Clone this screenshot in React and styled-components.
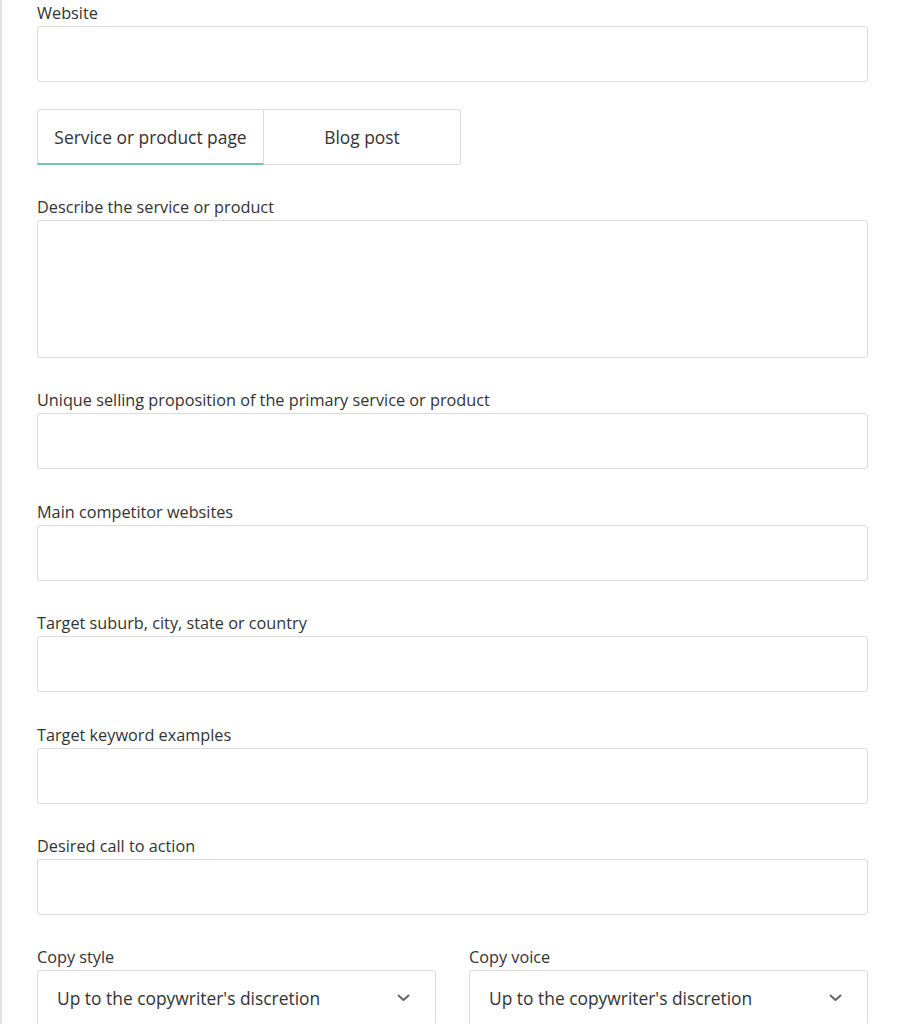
import React, { useState } from 'react'
import styled, { createGlobalStyle } from 'styled-components'

const GlobalStyle = createGlobalStyle`
    html, body {
        margin: 0;
        padding: 0;
        background: #fff;
        font-family: "Open Sans", "Liberation Sans", sans-serif;
        color: #333;
    }
    * { box-sizing: border-box; }
`

const Page = styled.div`
    border-left: 2px solid #e4e4e4;
    min-height: 1024px;
    padding: 3px 36px 0 35px;
`

const Field = styled.div`
    margin-bottom: 32.4px;
`

const Label = styled.label`
    display: block;
    font-size: 16.25px;
    line-height: 20px;
    margin-bottom: 3px;
    color: #333;
`

const Input = styled.input`
    display: block;
    width: 100%;
    height: 56px;
    border: 1px solid #dcdcdc;
    border-radius: 3px;
    padding: 0 20px;
    font: inherit;
    font-size: 17.4px;
    outline: none;
`

const TextArea = styled.textarea`
    display: block;
    width: 100%;
    height: 138px;
    border: 1px solid #dcdcdc;
    border-radius: 3px;
    padding: 12px 20px;
    font: inherit;
    font-size: 17.4px;
    resize: none;
    outline: none;
`

const Tabs = styled.div`
    display: flex;
    margin: -5.4px 0 32px;
`

const Tab = styled.button`
    height: 56px;
    width: ${p => p.$w}px;
    background: #fff;
    border: 1px solid #dcdcdc;
    border-left-width: ${p => (p.$first ? 1 : 0)}px;
    border-bottom: ${p => (p.$active ? '2px solid #72c7a3' : '1px solid #dcdcdc')};
    border-radius: ${p => (p.$first ? '3px 0 0 0' : '0 3px 3px 0')};
    font-family: inherit;
    font-size: 17.4px;
    color: #333;
    cursor: pointer;
    padding: 0;
`

const Row = styled.div`
    display: grid;
    grid-template-columns: 1fr 1fr;
    column-gap: 33px;
`

const Select = styled.div`
    display: flex;
    align-items: center;
    justify-content: space-between;
    height: 56px;
    border: 1px solid #dcdcdc;
    border-radius: 3px;
    padding: 0 25px 0 19px;
    font-size: 17.4px;
    color: #333;
`

const Chevron = () => (
    <svg width="13" height="8" viewBox="0 0 13 8">
        <path d="M1.5 1.5 L6.5 6 L11.5 1.5" fill="none" stroke="#666" strokeWidth="2" strokeLinecap="round" strokeLinejoin="round" />
    </svg>
)

const fields = [
    'Unique selling proposition of the primary service or product',
    'Main competitor websites',
    'Target suburb, city, state or country',
    'Target keyword examples',
    'Desired call to action',
]

export default function App() {
    const [tab, setTab] = useState(0)
    return (
        <Page>
            <GlobalStyle />
            <Field>
                <Label>Website</Label>
                <Input />
            </Field>
            <Tabs>
                <Tab $first $w={227} $active={tab === 0} onClick={() => setTab(0)}>
                    Service or product page
                </Tab>
                <Tab $w={197} $active={tab === 1} onClick={() => setTab(1)}>
                    Blog post
                </Tab>
            </Tabs>
            <Field>
                <Label>Describe the service or product</Label>
                <TextArea />
            </Field>
            {fields.map(f => (
                <Field key={f}>
                    <Label>{f}</Label>
                    <Input />
                </Field>
            ))}
            <Row>
                <Field>
                    <Label>Copy style</Label>
                    <Select>
                        Up to the copywriter's discretion
                        <Chevron />
                    </Select>
                </Field>
                <Field>
                    <Label>Copy voice</Label>
                    <Select>
                        Up to the copywriter's discretion
                        <Chevron />
                    </Select>
                </Field>
            </Row>
        </Page>
    )
}
